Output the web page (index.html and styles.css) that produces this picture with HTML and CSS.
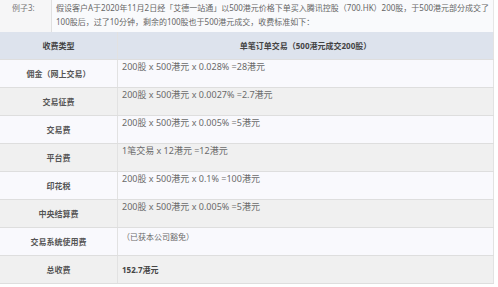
FILE: index.html
```html
<!DOCTYPE html>
<html lang="zh-CN">
<head>
<meta charset="utf-8">
<link rel="stylesheet" href="styles.css">
</head>
<body>
<div class="page">
  <div class="example">
    <div class="ex-label">例子3:</div>
    <div class="ex-text">假设客户A于2020年11月2日经「艾德一站通」以500港元价格下单买入腾讯控股（700.HK）200股，于500港元部分成交了100股后，过了10分钟，剩余的100股也于500港元成交，收费标准如下：</div>
  </div>
  <table class="fees">
    <thead>
      <tr><th class="c1">收费类型</th><th class="c2">单笔订单交易（500港元成交200股）</th></tr>
    </thead>
    <tbody>
      <tr class="w"><td class="k">佣金（网上交易）</td><td class="v">200股 x 500港元 x 0.028% =28港元</td></tr>
      <tr class="g"><td class="k">交易征费</td><td class="v">200股 x 500港元 x 0.0027% =2.7港元</td></tr>
      <tr class="w"><td class="k">交易费</td><td class="v">200股 x 500港元 x 0.005% =5港元</td></tr>
      <tr class="g"><td class="k">平台费</td><td class="v">1笔交易 x 12港元 =12港元</td></tr>
      <tr class="w"><td class="k">印花税</td><td class="v">200股 x 500港元 x 0.1% =100港元</td></tr>
      <tr class="g"><td class="k">中央结算费</td><td class="v">200股 x 500港元 x 0.005% =5港元</td></tr>
      <tr class="w"><td class="k">交易系统使用费</td><td class="v note">（已获本公司豁免）</td></tr>
      <tr class="g"><td class="k">总收费</td><td class="v total">152.7港元</td></tr>
    </tbody>
  </table>
</div>
</body>
</html>
```
FILE: styles.css
```css
html, body {
  margin: 0;
  padding: 0;
  background: #ffffff;
}
body {
  font-family: "Noto Sans", "Noto Sans CJK SC", "Liberation Sans", sans-serif;
  font-size: 8px;
  color: #666;
}
.page {
  width: 494px;
}
.example {
  display: grid;
  grid-template-columns: 52px 1fr;
  background: #f9fafc;
  border-right: 1px solid #e6e6e6;
}
.ex-label {
  padding: 1px 0 0 12px;
  line-height: 14px;
  color: #777;
  background: #f6f6f7;
  border-right: 1px solid #e0e0e0;
}
.ex-text {
  padding: 1px 2px 3px 4px;
  line-height: 14px;
  color: #666;
}
.fees {
  width: 494px;
  border-collapse: collapse;
  table-layout: fixed;
}
.fees th, .fees td {
  border-right: 1px solid #e2e2e2;
  border-bottom: 1px solid #dedede;
  padding: 0;
}
.fees th {
  background: #dde3ed;
  height: 27px;
  font-weight: bold;
  color: #444;
  text-align: center;
}
.c1 {
  width: 117px;
}
.fees td.k {
  height: 27px;
  text-align: center;
  vertical-align: middle;
  font-weight: bold;
  color: #555;
}
.fees td.v {
  vertical-align: top;
  padding: 1px 0 0 4px;
  font-size: 9px;
  line-height: 12px;
  color: #6a6a6a;
}
.fees td.note {
  font-size: 8px;
  padding-top: 3px;
}
.fees td.total {
  vertical-align: middle;
  padding-top: 0;
  font-size: 8px;
  font-weight: bold;
  color: #444;
}
tr.w td {
  background: #f9f9fd;
}
tr.g td {
  background: #f0f0f0;
}
```
